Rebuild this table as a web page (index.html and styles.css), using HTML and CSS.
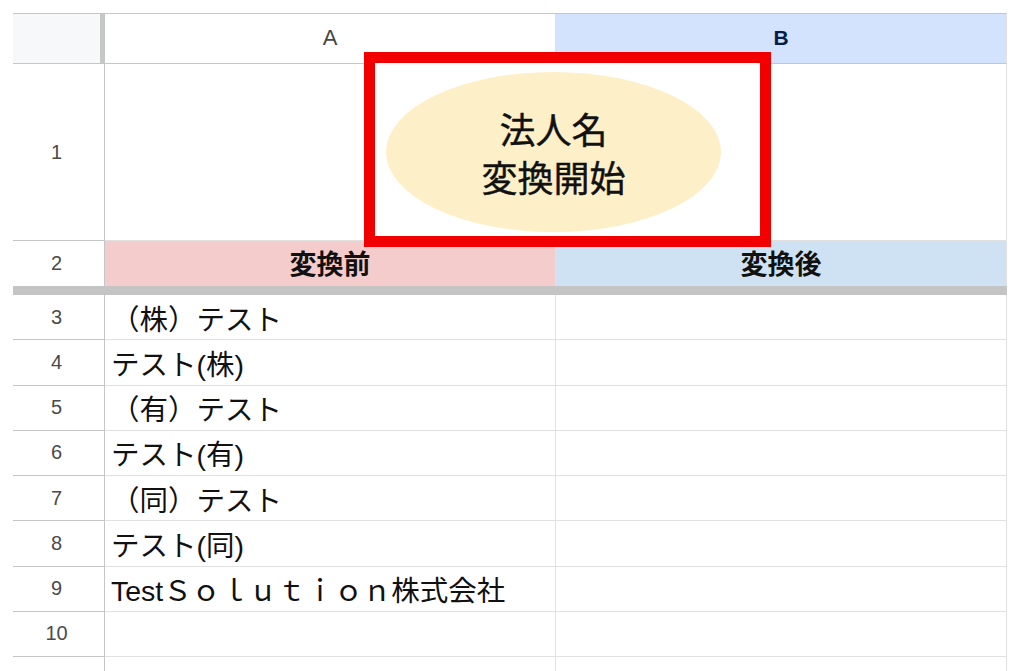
FILE: index.html
```html
<!DOCTYPE html>
<html lang="ja">
<head>
<meta charset="utf-8">
<title>法人名変換</title>
<link rel="stylesheet" href="styles.css">
</head>
<body>
<div class="sheet">
  <div class="corner"></div>
  <div class="colhead">A</div>
  <div class="colhead colhead-sel">B</div>

  <div class="rowhead row1">1</div>
  <div class="cell row1"></div>
  <div class="cell row1"></div>

  <div class="rowhead row2">2</div>
  <div class="cell title title-a">変換前</div>
  <div class="cell title title-b">変換後</div>

  <div class="freeze"></div>

  <div class="rowhead">3</div><div class="cell">（株）テスト</div><div class="cell"></div>
  <div class="rowhead">4</div><div class="cell">テスト(株)</div><div class="cell"></div>
  <div class="rowhead">5</div><div class="cell">（有）テスト</div><div class="cell"></div>
  <div class="rowhead">6</div><div class="cell">テスト(有)</div><div class="cell"></div>
  <div class="rowhead">7</div><div class="cell">（同）テスト</div><div class="cell"></div>
  <div class="rowhead">8</div><div class="cell">テスト(同)</div><div class="cell"></div>
  <div class="rowhead">9</div><div class="cell">TestＳｏｌｕｔｉｏｎ株式会社</div><div class="cell"></div>
  <div class="rowhead">10</div><div class="cell"></div><div class="cell"></div>
  <div class="rowhead"></div><div class="cell"></div><div class="cell"></div>

  <div class="drawing">
    <div class="button-oval">法人名<br>変換開始</div>
  </div>
</div>
</body>
</html>
```

FILE: styles.css
```css
* { box-sizing: border-box; }
html, body { margin: 0; padding: 0; background: #ffffff; }
body {
  font-family: "Liberation Sans", Arial, "Noto Sans CJK JP", sans-serif;
  color: #111111;
  overflow: hidden;
  height: 671px;
}
.sheet {
  position: relative;
  margin: 13px 0 0 13px;
  width: 994px;
  display: grid;
  grid-template-columns: 92px 451px 451px;
  grid-template-rows: 50px 177px 45px 9px repeat(8, 45.25px) 45px;
  border-top: 1px solid #c4c7c5;
  border-right: 1px solid #e1e1e1;
}
.corner {
  background: #f6f8f9;
  border-right: 5px solid #c4c7c5;
  border-bottom: 1px solid #c4c7c5;
}
.colhead {
  display: flex;
  align-items: center;
  justify-content: center;
  padding-bottom: 2px;
  font-size: 22px;
  color: #444746;
  border-bottom: 1px solid #c4c7c5;
  border-right: 1px solid #e1e1e1;
  background: #ffffff;
}
.colhead-sel {
  background: #d3e3fd;
  color: #041e49;
  font-weight: bold;
  font-size: 21px;
}
.rowhead {
  display: flex;
  align-items: center;
  justify-content: center;
  padding-right: 4px;
  font-size: 20px;
  color: #4a4a4a;
  border-right: 1px solid #c4c7c5;
  border-bottom: 1px solid #c4c7c5;
}
.cell {
  display: flex;
  align-items: center;
  padding: 0 0 0 6px;
  font-size: 28.5px;
  color: #111111;
  border-right: 1px solid #e1e1e1;
  border-bottom: 1px solid #e1e1e1;
  white-space: nowrap;
}
.title {
  justify-content: center;
  font-weight: bold;
  font-size: 27px;
  padding: 0 0 3px 0;
  border-bottom: 0;
}
.title-a { background: #f4cccc; }
.title-b { background: #cfe2f3; }
.row2 { border-bottom: 0; }
.freeze {
  grid-column: 1 / -1;
  background: #c4c4c4;
}
.drawing {
  position: absolute;
  left: 351px;
  top: 38px;
  width: 407px;
  height: 195px;
  border: 11px solid #f20000;
  background: #ffffff;
  display: flex;
  align-items: flex-start;
  justify-content: flex-start;
  padding: 9px 0 0 11px;
}
.button-oval {
  width: 335px;
  height: 160px;
  border-radius: 50%;
  background: #fdefc8;
  display: flex;
  align-items: center;
  justify-content: center;
  text-align: center;
  font-family: "Noto Sans CJK JP", sans-serif;
  font-size: 36px;
  line-height: 48px;
  color: #111111;
  -webkit-text-stroke: 0.4px #111111;
}
```
